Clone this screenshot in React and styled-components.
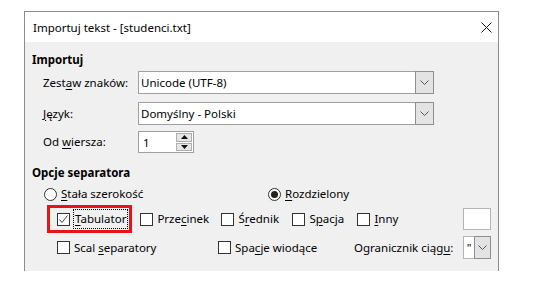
import React from "react";
import styled, { createGlobalStyle } from "styled-components";

const Global = createGlobalStyle`
  html, body { margin: 0; padding: 0; background: #ffffff; }
  body { font-family: "Noto Sans", "Segoe UI", sans-serif; font-size: 11.5px; color: #000; }
  #root { padding: 11px 0 0 24px; }
`;

const Window = styled.div`
  width: 473px;
  border: 1px solid #8c8c8c;
  border-bottom: none;
  background: #f0f0f0;
  height: 259px;
  display: flex;
  flex-direction: column;
`;

const TitleBar = styled.div`
  height: 30px;
  background: #fff;
  display: flex;
  align-items: center;
  justify-content: space-between;
  padding: 0 2px 0 8px;
  font-size: 11.5px;
`;

const CloseBtn = styled.div`
  width: 20px;
  height: 20px;
  display: flex;
  align-items: center;
  justify-content: center;
`;

const Body = styled.div`
  padding: 10px 7px 0 7px;
  display: flex;
  flex-direction: column;
`;

const Heading = styled.div`
  font-weight: 700;
  line-height: 16px;
  height: 16px;
  margin-top: ${(p) => p.$mt || 0}px;
`;

const FormRow = styled.div`
  display: flex;
  align-items: center;
  margin-top: ${(p) => p.$mt || 0}px;
  padding-left: 11px;
`;

const Label = styled.div`
  width: 95px;
  line-height: 16px;
`;

const U = styled.span`
  text-decoration: underline;
  text-underline-offset: 2px;
`;

const Select = styled.div`
  width: 296px;
  height: ${(p) => p.$h || 23}px;
  border: 1px solid #a0a0a0;
  background: #fff;
  display: flex;
  align-items: stretch;
  box-sizing: border-box;
`;

const SelectText = styled.div`
  flex: 1;
  display: flex;
  align-items: center;
  padding-left: 2px;
`;

const DropBtn = styled.div`
  width: ${(p) => p.$w || 17}px;
  background: #e3e3e3;
  border: 1px solid #8f8f8f;
  margin: -1px -1px -1px 0;
  display: flex;
  align-items: center;
  justify-content: center;
`;

const Spin = styled.div`
  width: 56px;
  height: 22px;
  border: 1px solid #a0a0a0;
  background: #fff;
  box-sizing: border-box;
  display: flex;
`;

const SpinText = styled.div`
  flex: 1;
  display: flex;
  align-items: center;
  padding-left: 4px;
`;

const SpinBtns = styled.div`
  width: 16px;
  display: flex;
  flex-direction: column;
  gap: 1px;
  padding: 1px 1px 1px 0;
`;

const SpinBtn = styled.div`
  flex: 1;
  background: #e6e6e6;
  border: 1px solid #adadad;
  display: flex;
  align-items: center;
  justify-content: center;
`;

const OptRow = styled.div`
  display: flex;
  align-items: center;
  height: ${(p) => p.$h || 16}px;
  margin-top: ${(p) => p.$mt || 0}px;
  padding-left: ${(p) => p.$pl || 0}px;
`;

const Item = styled.div`
  display: flex;
  align-items: center;
  width: ${(p) => (p.$w ? p.$w + "px" : "auto")};
  flex: ${(p) => (p.$grow ? 1 : "none")};
  line-height: 16px;
`;

const Radio = styled.span`
  width: 11px;
  height: 11px;
  border: 1px solid #333;
  border-radius: 50%;
  background: #fff;
  margin-right: 4px;
  display: flex;
  align-items: center;
  justify-content: center;
  &::after {
    content: "";
    display: ${(p) => (p.$on ? "block" : "none")};
    width: 7px;
    height: 7px;
    border-radius: 50%;
    background: #222;
  }
`;

const Box = styled.span`
  width: 11px;
  height: 11px;
  border: 1px solid #333;
  background: #fff;
  margin-right: 4px;
  display: flex;
  align-items: center;
  justify-content: center;
  flex: none;
`;

const Highlight = styled.div`
  border: 3px solid #e8141b;
  height: 22px;
  display: flex;
  align-items: center;
  padding: 0 2px 0 7px;
  margin-left: -10px;
  margin-right: 8px;
`;

const Focus = styled.span`
  outline: 1px dotted #000;
  outline-offset: 0px;
  padding: 1px 1px;
  line-height: 16px;
`;

const SmallInput = styled.div`
  width: 28px;
  height: 22px;
  border: 1px solid #b4b4b4;
  background: #fff;
  box-sizing: border-box;
`;

const Combo = styled.div`
  width: 28px;
  height: 23px;
  border: 1px solid #b4b4b4;
  background: #fff;
  box-sizing: border-box;
  display: flex;
`;

const ComboText = styled.div`
  width: 11px;
  display: flex;
  align-items: center;
  justify-content: center;
  padding-top: 0px;
`;

const Chevron = () => (
  <svg width="9" height="5" viewBox="0 0 9 5">
    <path d="M0.5 0.5 L4.5 4.5 L8.5 0.5" fill="none" stroke="#555" strokeWidth="1" />
  </svg>
);

const Check = () => (
  <svg width="11" height="11" viewBox="0 0 11 11">
    <path d="M1.5 5.5 L4 8.5 L9.5 1.5" fill="none" stroke="#444" strokeWidth="1" />
  </svg>
);

const Tri = ({ up }) => (
  <svg width="7" height="4" viewBox="0 0 7 4">
    <path d={up ? "M0 4 L3.5 0 L7 4 Z" : "M0 0 L3.5 4 L7 0 Z"} fill="#111" />
  </svg>
);

export default function App() {
  return (
    <>
      <Global />
      <Window>
        <TitleBar>
          <span>Importuj tekst - [studenci.txt]</span>
          <CloseBtn>
            <svg width="11" height="11" viewBox="0 0 11 11">
              <path d="M0.5 0.5 L10.5 10.5 M10.5 0.5 L0.5 10.5" stroke="#111" strokeWidth="1" />
            </svg>
          </CloseBtn>
        </TitleBar>
        <Body>
          <Heading>Importuj</Heading>
          <FormRow $mt={3}>
            <Label>
              Zest<U>a</U>w znaków:
            </Label>
            <Select>
              <SelectText>Unicode (UTF-8)</SelectText>
              <DropBtn>
                <Chevron />
              </DropBtn>
            </Select>
          </FormRow>
          <FormRow $mt={8}>
            <Label>
              <U>J</U>ęzyk:
            </Label>
            <Select>
              <SelectText>Domyślny - Polski</SelectText>
              <DropBtn>
                <Chevron />
              </DropBtn>
            </Select>
          </FormRow>
          <FormRow $mt={6}>
            <Label>
              Od <U>w</U>iersza:
            </Label>
            <Spin>
              <SpinText>1</SpinText>
              <SpinBtns>
                <SpinBtn>
                  <Tri up />
                </SpinBtn>
                <SpinBtn>
                  <Tri />
                </SpinBtn>
              </SpinBtns>
            </Spin>
          </FormRow>
          <Heading $mt={12}>Opcje separatora</Heading>
          <OptRow $mt={5} $pl={12}>
            <Item $w={224}>
              <Radio />
              <span>
                <U>S</U>tała szerokość
              </span>
            </Item>
            <Item>
              <Radio $on />
              <span>
                <U>R</U>ozdzielony
              </span>
            </Item>
          </OptRow>
          <OptRow $mt={3} $h={28} $pl={25}>
            <Highlight>
              <Box>
                <Check />
              </Box>
              <Focus>
                <U>T</U>abulator
              </Focus>
            </Highlight>
            <Item $w={81}>
              <Box />
              <span>
                Prze<U>c</U>inek
              </span>
            </Item>
            <Item $w={71}>
              <Box />
              <span>
                Ś<U>r</U>ednik
              </span>
            </Item>
            <Item $w={65}>
              <Box />
              <span>
                S<U>p</U>acja
              </span>
            </Item>
            <Item $grow>
              <Box />
              <span>
                <U>I</U>nny
              </span>
            </Item>
            <SmallInput />
          </OptRow>
          <OptRow $mt={3} $h={23} $pl={25}>
            <Item $w={161}>
              <Box />
              <span>
                Scal <U>s</U>eparatory
              </span>
            </Item>
            <Item $w={136}>
              <Box />
              <span>
                Spa<U>c</U>je wiodące
              </span>
            </Item>
            <Item $grow>
              <span>
                Ogranicznik ciąg<U>u</U>:
              </span>
            </Item>
            <Combo>
              <ComboText>"</ComboText>
              <DropBtn $w={16}>
                <Chevron />
              </DropBtn>
            </Combo>
          </OptRow>
        </Body>
      </Window>
    </>
  );
}
